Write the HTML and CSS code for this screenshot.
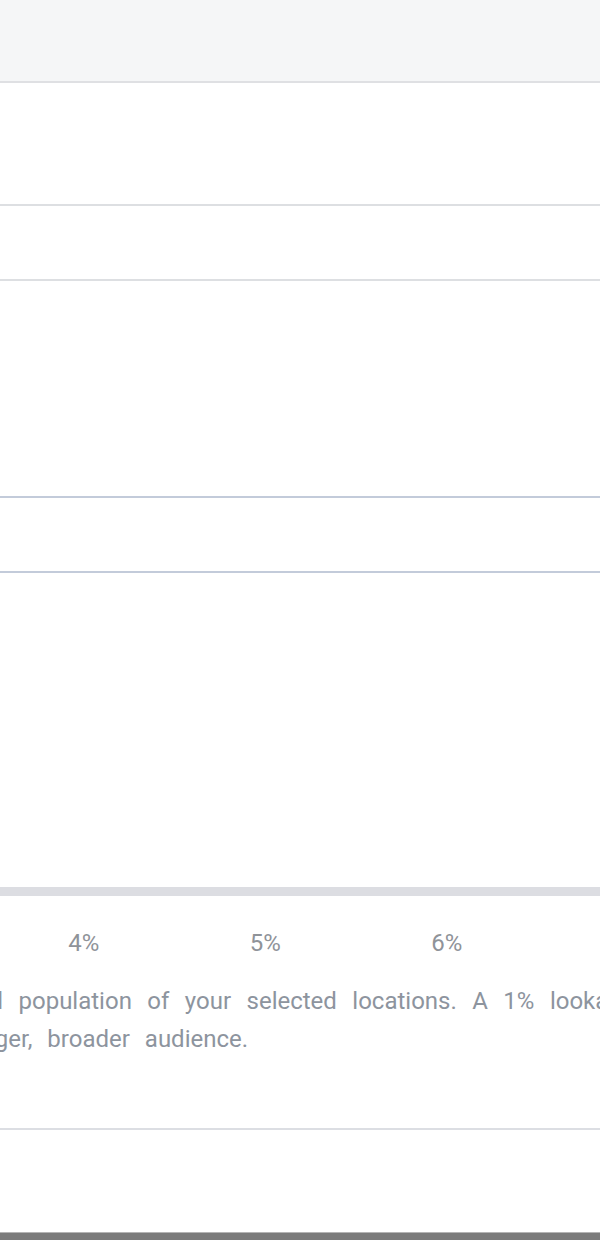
FILE: index.html
```html
<!DOCTYPE html>
<html>

  <head>
    <meta charset="UTF-8">
    <title>Lookalike audience size</title>
    <link rel="stylesheet" href="styles.css">
  </head>

  <body>
    <div class="page">
      <div class="topbar"></div>
      <div class="row row-tall"></div>
      <div class="row row-short"></div>
      <div class="row row-large"></div>
      <div class="row row-short row-blue"></div>
      <div class="size">
        <div class="track"></div>
        <div class="ticks">
          <span>4%</span>
          <span>5%</span>
          <span>6%</span>
        </div>
        <div class="note">
          <div class="line line-first">total population of your selected locations. A 1% lookalike</div>
          <div class="line line-second">larger, broader audience.</div>
        </div>
      </div>
      <div class="footer"></div>
      <div class="bottombar"></div>
    </div>
  </body>

</html>
```

FILE: styles.css
```css
* {
  margin: 0;
  padding: 0;
  box-sizing: border-box;
}

body {
  background: #fff;
  font-family: Roboto, "Liberation Sans", sans-serif;
  overflow: hidden;
}

.page {
  width: 600px;
  height: 1240px;
  overflow: hidden;
}

.topbar {
  height: 83px;
  background: #f5f6f7;
  border-bottom: 2px solid #dfe0e3;
}

.row {
  border-bottom: 2px solid #dddfe2;
}

.row-tall {
  height: 123px;
}

.row-short {
  height: 75px;
}

.row-large {
  height: 217px;
  border-bottom-color: #c3cbda;
}

.row-blue {
  border-bottom-color: #c3cbda;
}

/* slider + helper text */
.size {
  padding-top: 314px;
  padding-bottom: 70px;
  border-bottom: 2px solid #dcdee3;
}

.track {
  height: 9px;
  background: #dcdde2;
}

.ticks {
  display: flex;
  margin-top: 32px;
  margin-left: -7px;
  font-size: 24px;
  line-height: 30px;
  color: #8f9399;
}

.ticks span {
  width: 181.5px;
  flex: none;
  text-align: center;
}

.note {
  margin-top: 24px;
  font-size: 24px;
  line-height: 38px;
  color: #8d949e;
  white-space: nowrap;
}

.line-first {
  text-indent: -45px;
  word-spacing: 9.5px;
}

.line-second {
  text-indent: -32px;
  word-spacing: 9px;
}

.footer {
  height: 102px;
}

.bottombar {
  height: 8px;
  background: #7b7b7b;
  border-top: 1px solid #b4b4b4;
}
```
